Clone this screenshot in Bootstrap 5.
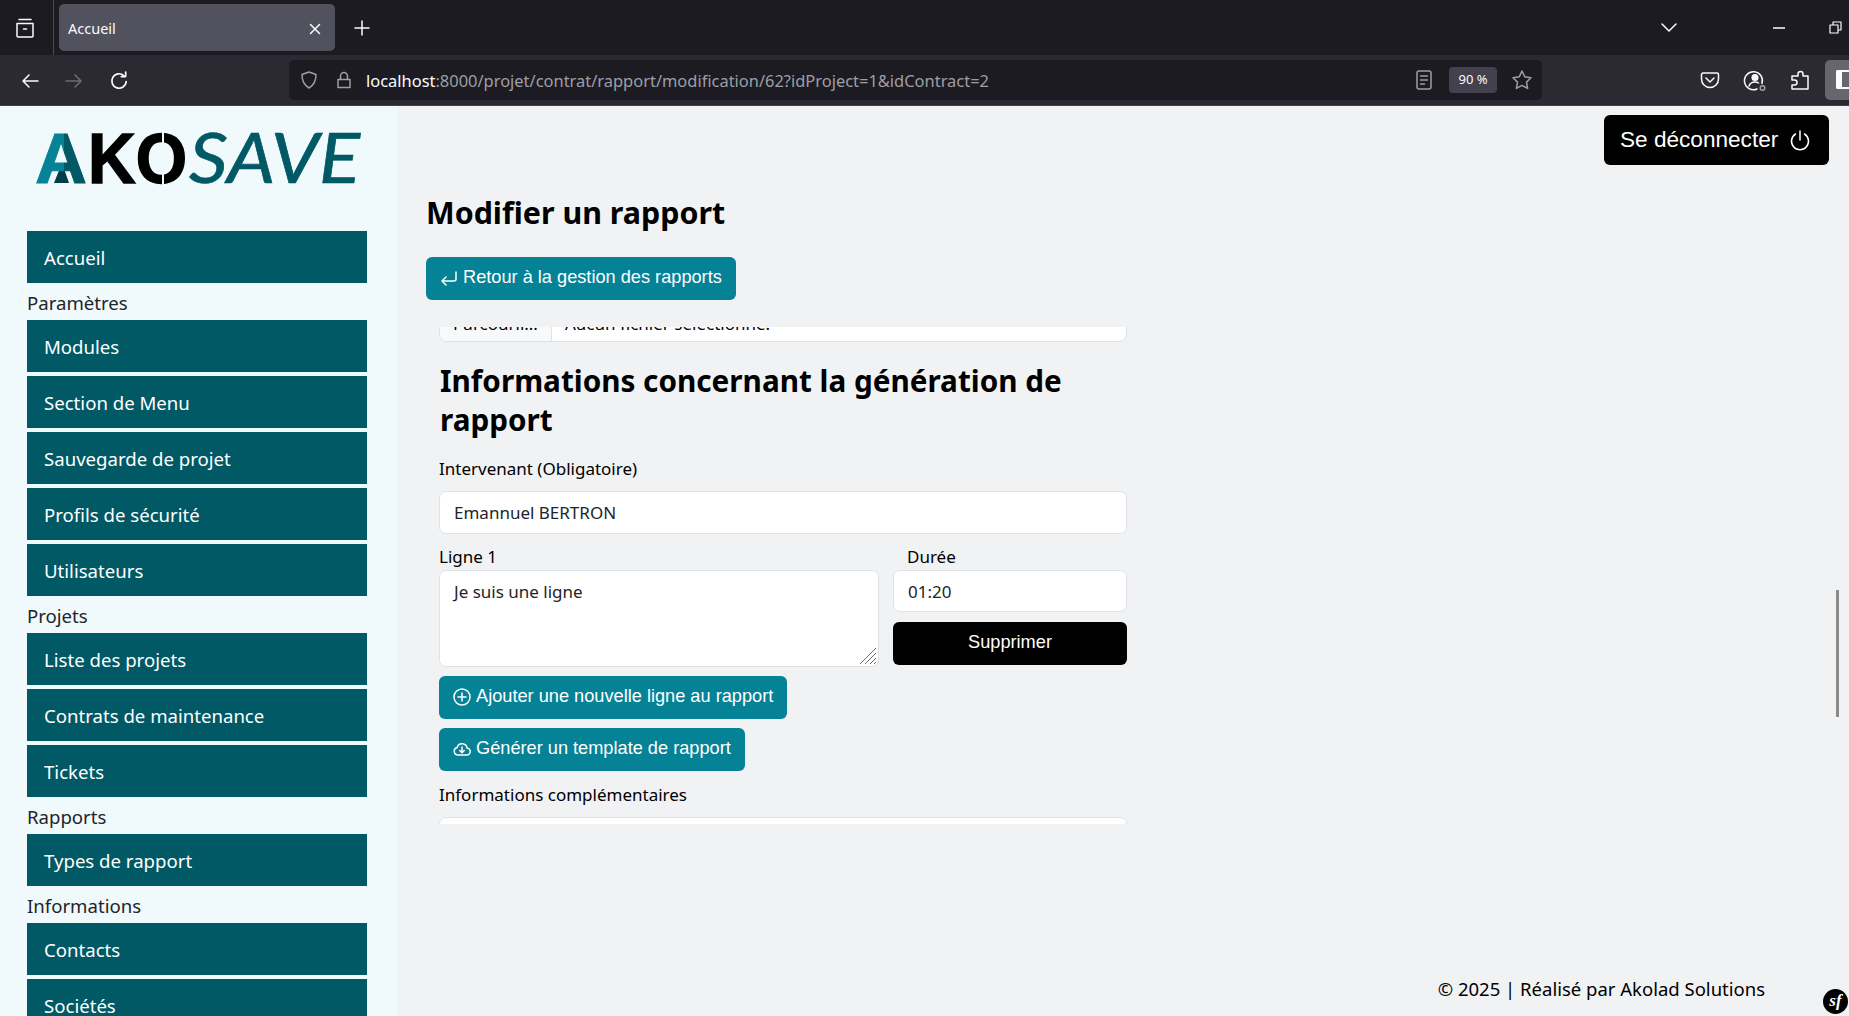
<!DOCTYPE html>
<html lang="fr">
<head>
  <meta charset="UTF-8" />
  <meta name="viewport" content="width=device-width, initial-scale=1.0"/>
  <title>Accueil</title>
  <link href="https://cdn.jsdelivr.net/npm/bootstrap@5.3.0/dist/css/bootstrap.min.css" rel="stylesheet"/>
  <style>
    html, body { height: 100%; overflow: hidden; }
    body { background: #f1f2f4; font-family: "Noto Sans", "Open Sans", sans-serif; color: #000; }
    .ui-icon { fill: none; stroke: currentColor; stroke-width: 1.5; stroke-linecap: round; stroke-linejoin: round; flex: none; }

    /* fenetre navigateur */
    .tab-strip { height: 55px; background: #1c1b22; color: #fbfbfe; }
    .tab-left { width: 54px; height: 55px; padding-right: 4px; border-right: 1px solid #4a4952; }
    .tab-item { width: 276px; height: 47px; margin-left: 5px; background: #52525e; border-radius: 5px; padding: 2px 14px 0 9px; font-size: 14.5px; }
    .tab-plus { margin-left: 19px; }
    .tool-bar { height: 51px; background: #2b2a33; color: #fbfbfe; border-bottom: 1px solid #3f3f46; }
    .nav-group { width: 289px; padding: 1px 0 0 21px; gap: 26px; }
    .url-box { width: 1253px; height: 40px; background: #1c1b22; border-radius: 5px; font-size: 16.45px; color: #9e9ea6; }
    .url-text { margin: 3px 0 0 13px; }
    .url-host { color: #fbfbfe; }
    .zoom-chip { background: #42414d; border-radius: 4px; font-size: 13px; width: 48px; height: 26px; color: #fbfbfe; }
    .side-toggle { width: 24px; height: 40px; background: #67666f; border-radius: 5px 0 0 5px; padding: 10px 0 0 11px; overflow: hidden; }
    .side-toggle span { display: block; width: 13px; height: 19px; border: 2px solid #fbfbfe; border-left-width: 6px; border-right: 0; border-radius: 2px 0 0 2px; }

    /* page */
    .page-wrap { height: 910px; }
    .side-col { width: 398px; flex: none; background: #f0f9fc; padding: 2px 31px 0 27px; overflow: hidden; }
    .logo-box { height: 123px; }
    .side-link { display: flex; align-items: center; height: 52px; margin-bottom: 4px; padding: 2px 0 0 17px; background: #005965; color: #fff; font-size: 18.6px; text-decoration: none; }
    .side-title { height: 37px; margin-top: -4px; padding-top: 1px; font-size: 18.6px; line-height: 37px; color: #212529; }
    .main-col { position: relative; min-width: 0; }
    .top-right { height: 59px; padding: 9px 20px 0 0; }
    .logout-btn { width: 225px; height: 50px; border-radius: 6px; background: #000; color: #fff; font-family: "Liberation Sans", sans-serif; font-size: 22.6px; padding: 0 0 0 15px; gap: 12px; }
    .page-title { font-size: 30.4px; font-weight: 700; line-height: 38px; margin: 29px 0 25px; padding-left: 28px; }
    .back-row { padding-left: 28px; }
    .teal-btn { background: #058296; color: #fff; border: 0; border-radius: 6px; height: 43px; font-family: "Liberation Sans", sans-serif; font-size: 18.2px; padding: 0 14px 1px; display: inline-flex; align-items: center; gap: 5px; }
    .teal-btn:hover { background: #058296; color: #fff; }

    .form-clip { height: 497px; width: 701px; margin: 27px 0 0 28px; overflow: hidden; padding: 0 0 0 13px; }
    .form-inner { width: 688px; margin-top: -28px; }
    .file-row { height: 43px; background: #fff; border: 1px solid #dee2e6; border-radius: 8px; font-size: 17px; overflow: hidden; }
    .file-btn { width: 112px; background: #f8f9fa; border-right: 1px solid #dee2e6; text-align: center; padding-top: 11px; }
    .file-name { padding: 11px 0 0 13px; }
    .sec-title { font-size: 29.7px; font-weight: 700; line-height: 39px; margin: 19px 0 16px; padding-left: 1px; }
    .lbl { display: block; font-size: 17px; line-height: 27px; margin: 0; }
    .fld { border: 1px solid #dee2e6; background: #fff; border-radius: 7px; font-size: 17px; color: #212529; font-family: "Noto Sans", sans-serif; padding: 7px 14px; box-shadow: none; }
    .fld-main { height: 43px; margin-top: 9px; }
    .ta-wrap { position: relative; }
    .ta-fld { height: 97px; padding-top: 8px; resize: none; }
    .ta-grip { position: absolute; right: 2px; bottom: 2px; stroke: #6b6b6b; stroke-width: 1; fill: none; }
    .dur-fld { height: 42px; }
    .del-btn { height: 43px; margin-top: 10px; border-radius: 6px; background: #000; color: #fff; font-family: "Liberation Sans", sans-serif; font-size: 18.2px; padding: 0 0 2px; }
    .ln-row { margin-top: 10px; }
    .ln-left { width: 440px; flex: none; }
    .ln-right { width: 234px; flex: none; margin-left: 14px; }
    .btn-stack { margin-top: 9px; gap: 9px; }

    .foot-text { position: absolute; right: 84px; bottom: 13px; font-size: 18.5px; line-height: 28px; }
    .sf-badge { position: absolute; right: 1px; bottom: 2px; width: 25px; height: 25px; border-radius: 50%; background: #000; color: #fff; font-family: "Liberation Serif", serif; font-style: italic; font-weight: 700; font-size: 17px; line-height: 24px; text-align: center; }
    .scroll-thumb { position: absolute; right: 10px; top: 484px; width: 3px; height: 127px; background: #8a8a8a; }
  </style>
</head>
<body>

  <div class="tab-strip d-flex align-items-center">
    <div class="tab-left d-flex align-items-center justify-content-center">
      <svg class="ui-icon" width="22" height="22" viewBox="0 0 22 22"><path d="M5 2.500h12M3 6.500h16v12.500a1 1 0 0 1-1 1H4a1 1 0 0 1-1-1zM9.500 12h3"/></svg>
    </div>
    <div class="tab-item d-flex align-items-center justify-content-between">
      <span>Accueil</span>
      <svg class="ui-icon" width="12" height="12" viewBox="0 0 12 12"><path d="M1.500 1.500l9 9M10.500 1.500l-9 9"/></svg>
    </div>
    <svg class="ui-icon tab-plus" width="16" height="16" viewBox="0 0 16 16"><path d="M8 1v14M1 8h14"/></svg>
    <div class="ms-auto d-flex align-items-center">
      <svg class="ui-icon" width="16" height="10" viewBox="0 0 16 10" style="margin-right:96px"><path d="M1 1l7 7 7-7"/></svg>
      <svg class="ui-icon" width="12" height="2" viewBox="0 0 12 2" style="margin-right:44px"><path d="M0 1h12"/></svg>
      <svg class="ui-icon" width="13" height="13" viewBox="0 0 13 13" style="margin-right:7px"><path d="M1 4h8v8H1zM4 4V1h8v8H9" stroke-width="1.200"/></svg>
    </div>
  </div>

  <div class="tool-bar d-flex align-items-center">
    <div class="nav-group d-flex align-items-center">
      <svg class="ui-icon" width="18" height="18" viewBox="0 0 18 18"><path d="M17 9H2M8 3L2 9l6 6"/></svg>
      <svg class="ui-icon" width="18" height="18" viewBox="0 0 18 18" style="color:#6d6c73"><path d="M1 9h15M10 3l6 6-6 6"/></svg>
      <svg class="ui-icon" width="20" height="20" viewBox="0 0 18 18"><path d="M15.500 9.500a6.500 6.500 0 1 1-2-5.200M15 1v4h-4"/></svg>
    </div>
    <div class="url-box d-flex align-items-center">
      <svg class="ui-icon" width="20" height="20" viewBox="0 0 20 20" style="margin-left:10px"><path d="M10 2l7 2.500c0 6.500-2.500 11-7 13.500C5.500 15.500 3 11 3 4.500z"/></svg>
      <svg class="ui-icon" width="18" height="20" viewBox="0 0 18 20" style="margin-left:16px"><path d="M3 9.500h12v8H3zM5.500 9.500V6a3.500 3.500 0 0 1 7 0v3.500"/></svg>
      <span class="url-text"><span class="url-host">localhost</span>:8000/projet/contrat/rapport/modification/62?idProject=1&amp;idContract=2</span>
      <svg class="ui-icon ms-auto" width="16" height="20" viewBox="0 0 16 20"><path d="M3 1h10a2 2 0 0 1 2 2v14a2 2 0 0 1-2 2H3a2 2 0 0 1-2-2V3a2 2 0 0 1 2-2zM4.500 6h7M4.500 10h7M4.500 14h4"/></svg>
      <div class="zoom-chip d-flex align-items-center justify-content-center" style="margin-left:17px">90 %</div>
      <svg class="ui-icon" width="22" height="22" viewBox="0 0 22 22" style="margin:0 9px 0 14px"><path d="M11 2l2.800 5.800 6.200.9-4.500 4.400 1.100 6.300L11 16.400l-5.600 3 1.100-6.300L2 8.700l6.200-.9z"/></svg>
    </div>
    <svg class="ui-icon" width="20" height="20" viewBox="0 0 20 20" style="margin-left:158px"><path d="M3 3h14a1.500 1.500 0 0 1 1.500 1.500V9a8.500 8.500 0 0 1-17 0V4.500A1.500 1.500 0 0 1 3 3zM6 8l4 4 4-4"/></svg>
    <svg class="ui-icon" width="24" height="24" viewBox="0 0 24 24" style="margin-left:23px"><path d="M19 15.500A9 9 0 1 0 14 21M6 18c1-3 3-4 6-4 1.500 0 2.500.3 3.500 1"/><circle cx="12" cy="9.500" r="2.800" fill="currentColor"/><circle cx="19.500" cy="20" r="2.300" stroke="#9e9ea6"/></svg>
    <svg class="ui-icon" width="22" height="22" viewBox="0 0 22 22" style="margin-left:22px"><path d="M3 7h6V5a2.500 2.500 0 0 1 5 0v2h5v13H3v-4h2.500a2.500 2.500 0 0 0 0-5H3z"/></svg>
    <div class="side-toggle ms-auto"><span></span></div>
  </div>

  <div class="page-wrap d-flex">
    <aside class="side-col">
      <div class="logo-box">
        <svg width="340" height="95" viewBox="0 0 340 95">
          <defs>
            <linearGradient id="logoA" x1="0" y1="0" x2="1" y2="0">
              <stop offset="0" stop-color="#058296"/>
              <stop offset="0.55" stop-color="#058296"/>
              <stop offset="0.56" stop-color="#005965"/>
              <stop offset="1" stop-color="#005965"/>
            </linearGradient>
          </defs>
          <polygon points="27,75 35,55 42,75" fill="#003d48"/>
          <text x="8" y="75" font-family="Liberation Sans" font-weight="700" font-size="70" fill="url(#logoA)" stroke="url(#logoA)" stroke-width="1" textLength="52" lengthAdjust="spacingAndGlyphs">A</text>
          <text x="61" y="75" font-family="Liberation Sans" font-weight="700" font-size="70" fill="#000" stroke="#000" stroke-width="1.500" textLength="99" lengthAdjust="spacingAndGlyphs">KO</text>
          <rect x="135" y="21" width="2" height="58" fill="#f0f9fc"/>
          <text x="162" y="75" font-family="Lato" font-style="italic" font-size="70" fill="#005965" stroke="#005965" stroke-width="0.700" textLength="171" lengthAdjust="spacingAndGlyphs">SAVE</text>
        </svg>
      </div>
      <a class="side-link" href="#">Accueil</a>
      <div class="side-title">Paramètres</div>
      <a class="side-link" href="#">Modules</a>
      <a class="side-link" href="#">Section de Menu</a>
      <a class="side-link" href="#">Sauvegarde de projet</a>
      <a class="side-link" href="#">Profils de sécurité</a>
      <a class="side-link" href="#">Utilisateurs</a>
      <div class="side-title">Projets</div>
      <a class="side-link" href="#">Liste des projets</a>
      <a class="side-link" href="#">Contrats de maintenance</a>
      <a class="side-link" href="#">Tickets</a>
      <div class="side-title">Rapports</div>
      <a class="side-link" href="#">Types de rapport</a>
      <div class="side-title">Informations</div>
      <a class="side-link" href="#">Contacts</a>
      <a class="side-link" href="#">Sociétés</a>
    </aside>

    <main class="main-col flex-grow-1">
      <div class="top-right d-flex justify-content-end">
        <button class="btn logout-btn d-flex align-items-center" type="button">
          Se déconnecter
          <svg class="ui-icon" width="20" height="22" viewBox="0 0 20 22"><path d="M10 2v9M5.500 5a8.500 8.500 0 1 0 9 0"/></svg>
        </button>
      </div>
      <h1 class="page-title">Modifier un rapport</h1>
      <div class="back-row">
        <button class="teal-btn" type="button">
          <svg class="ui-icon" width="18" height="18" viewBox="0 0 18 18"><path d="M16 3v7a2 2 0 0 1-2 2H2M6 8l-4 4 4 4"/></svg>
          Retour à la gestion des rapports
        </button>
      </div>

      <div class="form-clip">
        <div class="form-inner">
          <div class="file-row d-flex">
            <div class="file-btn">Parcourir...</div>
            <div class="file-name">Aucun fichier sélectionné.</div>
          </div>
          <h2 class="sec-title">Informations concernant la génération de rapport</h2>
          <label class="lbl">Intervenant (Obligatoire)</label>
          <input class="form-control fld fld-main" type="text" value="Emannuel BERTRON">
          <div class="ln-row d-flex">
            <div class="ln-left">
              <label class="lbl" style="line-height:26px">Ligne 1</label>
              <div class="ta-wrap">
                <textarea class="form-control fld ta-fld">Je suis une ligne</textarea>
                <svg class="ta-grip" width="18" height="18" viewBox="0 0 18 18"><path d="M1 17L17 1M6 17L17 6M11 17l6-6M15 17l2-2"/></svg>
              </div>
            </div>
            <div class="ln-right">
              <label class="lbl" style="padding-left:14px;line-height:26px">Durée</label>
              <input class="form-control fld dur-fld" type="text" value="01:20">
              <button class="btn del-btn w-100" type="button">Supprimer</button>
            </div>
          </div>
          <div class="btn-stack d-flex flex-column align-items-start">
            <button class="teal-btn" type="button">
              <svg class="ui-icon" width="18" height="18" viewBox="0 0 18 18"><circle cx="9" cy="9" r="8"/><path d="M9 5v8M5 9h8"/></svg>
              Ajouter une nouvelle ligne au rapport
            </button>
            <button class="teal-btn" type="button">
              <svg class="ui-icon" width="18" height="18" viewBox="0 0 18 18"><path d="M5 15h8.500a3.500 3.500 0 0 0 .5-7 5 5 0 0 0-9.800-.5A3.800 3.800 0 0 0 5 15zM9 7v5.500M6.800 10.500L9 12.700l2.200-2.200"/></svg>
              Générer un template de rapport
            </button>
          </div>
          <label class="lbl" style="margin-top:10px">Informations complémentaires</label>
          <div class="fld fld-main"></div>
        </div>
      </div>

      <div class="foot-text">© 2025 | Réalisé par Akolad Solutions</div>
      <div class="sf-badge">sf</div>
      <div class="scroll-thumb"></div>
    </main>
  </div>

  <script src="https://cdn.jsdelivr.net/npm/bootstrap@5.3.0/dist/js/bootstrap.bundle.min.js"></script>
</body>
</html>
